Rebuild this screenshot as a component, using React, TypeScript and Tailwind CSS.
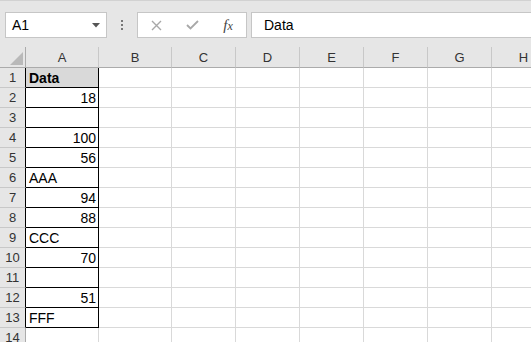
import { Fragment } from "react";

const COLUMNS = ["A", "B", "C", "D", "E", "F", "G", "H"];

type Cell = { value: string; num?: boolean; bold?: boolean; fill?: boolean };

const DATA: Cell[] = [
  { value: "Data", bold: true, fill: true },
  { value: "18", num: true },
  { value: "" },
  { value: "100", num: true },
  { value: "56", num: true },
  { value: "AAA" },
  { value: "94", num: true },
  { value: "88", num: true },
  { value: "CCC" },
  { value: "70", num: true },
  { value: "" },
  { value: "51", num: true },
  { value: "FFF" },
  { value: "" },
];

const FONT = "font-['Liberation_Sans',Arial,sans-serif]";

const FormulaBar = () => (
  <div className={`h-[47px] bg-[#e6e6e6] border-t border-[#d2d2d2] flex items-start pt-[11px] ${FONT}`}>
    {/* name box */}
    <div className="ml-[5px] w-[102px] h-[26px] bg-white border border-[#c6c6c6] flex items-center justify-between pl-[6px] pr-[6px]">
      <span className="text-[14px] text-black leading-none">A1</span>
      <svg width="8" height="5" viewBox="0 0 8 5">
        <polygon points="0,0 8,0 4,4.5" fill="#555" />
      </svg>
    </div>

    {/* splitter dots */}
    <div className="w-[30px] h-[26px] flex flex-col items-center justify-center gap-[2px]">
      <div className="w-[2px] h-[2px] bg-[#777]" />
      <div className="w-[2px] h-[2px] bg-[#777]" />
      <div className="w-[2px] h-[2px] bg-[#777]" />
    </div>

    {/* cancel / enter / fx */}
    <div className="w-[110px] h-[26px] bg-white border border-[#c6c6c6] flex items-center">
      <div className="w-[36px] flex justify-center">
        <svg width="11" height="11" viewBox="0 0 11 11">
          <path d="M1 1 L10 10 M10 1 L1 10" stroke="#a8a8a8" strokeWidth="1.4" />
        </svg>
      </div>
      <div className="w-[36px] flex justify-center">
        <svg width="13" height="10" viewBox="0 0 13 10">
          <path d="M1 5 L4.5 8.5 L12 1" stroke="#a8a8a8" strokeWidth="1.8" fill="none" />
        </svg>
      </div>
      <div className="w-[36px] flex justify-center">
        <span className="font-['Liberation_Serif',serif] italic text-[15px] leading-none text-[#444]">
          f<span className="text-[12px]">x</span>
        </span>
      </div>
    </div>

    {/* formula input */}
    <div className="ml-[4px] flex-1 h-[26px] bg-white border border-[#c6c6c6] border-r-0 flex items-center pl-[12px]">
      <span className="text-[14px] text-black leading-none">Data</span>
    </div>
  </div>
);

export default function App() {
  return (
    <div className={`w-[531px] h-[342px] overflow-hidden bg-white ${FONT}`}>
      <FormulaBar />

      <div className="grid grid-cols-[26px_73px_73px_64px_64px_64px_64px_64px_64px] auto-rows-[20px] grid-rows-[21px]">
        {/* header row */}
        <div className="bg-[#e6e6e6] border-r border-b border-[#ababab] flex items-end justify-end pr-[2px] pb-[2px]">
          <svg width="13" height="13" viewBox="0 0 13 13">
            <polygon points="13,0 13,13 0,13" fill="#b9b9b9" />
          </svg>
        </div>
        {COLUMNS.map((c) => (
          <div
            key={c}
            className="bg-[#e6e6e6] border-b border-b-[#ababab] border-r border-r-[#c8c8c8] flex items-center justify-center pt-[1px] text-[13px] text-[#333]"
          >
            {c}
          </div>
        ))}

        {/* data rows */}
        {DATA.map((cell, i) => {
          const bordered = i < 13;
          return (
            <Fragment key={i}>
              <div
                className={`bg-[#e6e6e6] border-b border-b-[#c8c8c8] border-r ${
                  bordered ? "border-r-black" : "border-r-[#ababab]"
                } flex items-center justify-center text-[13px] text-[#333]`}
              >
                {i + 1}
              </div>
              <div
                className={`border-b border-r ${
                  bordered ? "border-black" : "border-[#d9d9d9]"
                } ${cell.fill ? "bg-[#d9d9d9]" : ""} ${
                  cell.num ? "justify-end pr-[2px]" : "justify-start pl-[3px]"
                } ${cell.bold ? "font-bold" : ""} flex items-center pt-[1px] text-[14px] text-black`}
              >
                {cell.value}
              </div>
              {COLUMNS.slice(1).map((c) => (
                <div key={c} className="border-b border-r border-[#d9d9d9]" />
              ))}
            </Fragment>
          );
        })}
      </div>
    </div>
  );
}
